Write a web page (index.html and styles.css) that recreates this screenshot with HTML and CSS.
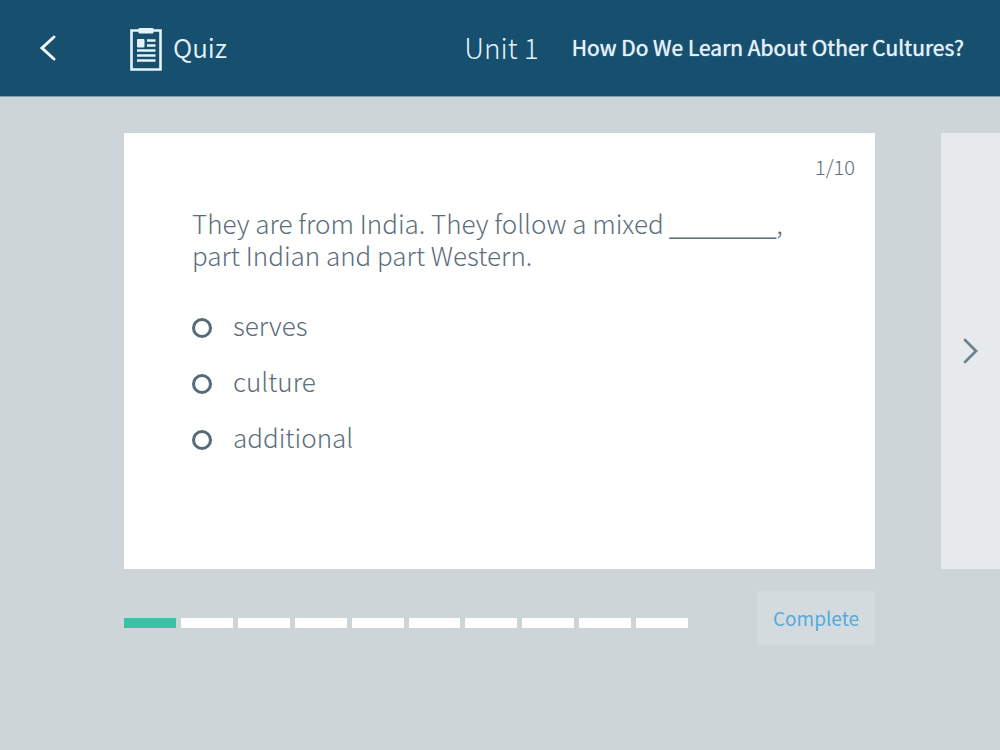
FILE: index.html
```html
<!DOCTYPE html>
<html lang="en">
<head>
  <meta charset="utf-8">
  <meta name="viewport" content="width=device-width, initial-scale=1">
  <title>Quiz - Unit 1</title>
  <link rel="stylesheet" href="styles.css">
</head>
<body>
  <header class="topbar">
    <button class="back" type="button" aria-label="Back">
      <svg width="18" height="28" viewBox="0 0 18 28" fill="none" stroke="currentColor" stroke-width="3" stroke-linecap="round"><path d="M15 3 3 14l12 11"/></svg>
    </button>
    <svg class="clipboard" width="32" height="43" viewBox="0 0 32 43" aria-hidden="true">
      <path d="M1.500 2.500h29v39h-29z" fill="none" stroke="currentColor" stroke-width="2.600"/>
      <rect x="8.500" y="0" width="15" height="5.500" rx="1" fill="currentColor"/>
      <rect x="7" y="11" width="7.500" height="8.500" rx="1" fill="currentColor"/>
      <path d="M17 12.500h8.500M17 17.500h8.500M7 22.500h18.500M7 27.500h18.500M7 32.500h18.500" stroke="currentColor" stroke-width="2.400"/>
    </svg>
    <h1 class="section">Quiz</h1>
    <span class="unit">Unit 1</span>
    <span class="topic">How Do We Learn About Other Cultures?</span>
  </header>
  <main class="stage">
    <section class="card">
      <p class="count">1/10</p>
      <fieldset class="quiz">
        <legend class="question">They are from India. They follow a mixed <span class="blank">________</span>,<br>part Indian and part Western.</legend>
        <label class="option"><input class="radio" type="radio" name="answer" value="serves">serves</label>
        <label class="option"><input class="radio" type="radio" name="answer" value="culture">culture</label>
        <label class="option"><input class="radio" type="radio" name="answer" value="additional">additional</label>
      </fieldset>
    </section>
    <button class="next" type="button" aria-label="Next question">
      <svg width="16" height="26" viewBox="0 0 16 26" fill="none" stroke="currentColor" stroke-width="2.800" stroke-linecap="round"><path d="m3 2 11 11L3 24"/></svg>
    </button>
    <div class="footer">
      <div class="progress" role="progressbar" aria-label="Progress" aria-valuemin="0" aria-valuemax="10" aria-valuenow="1">
        <span class="step current"></span><span class="step"></span><span class="step"></span><span class="step"></span><span class="step"></span><span class="step"></span><span class="step"></span><span class="step"></span><span class="step"></span><span class="step"></span>
      </div>
      <button class="complete" type="button">Complete</button>
    </div>
  </main>
</body>
</html>
```
FILE: styles.css
```css
* { box-sizing: border-box; }
body {
  margin: 0;
  min-height: 100vh;
  background: #ced5d9;
  color: #5c6e7b;
  font-family: "Noto Sans CJK SC", "Noto Sans", sans-serif;
  font-weight: 300;
}
button {
  padding: 0;
  border: 0;
  background: none;
  font: inherit;
  color: inherit;
  cursor: pointer;
}
svg { display: block; }
.topbar {
  display: flex;
  align-items: center;
  height: 97px;
  padding: 0 36px 0 39px;
  border-bottom: 1px solid #7f9fb3;
  background: #17506f;
  color: #e4f2fa;
  white-space: nowrap;
}
.back { margin-right: 73px; color: #f2f9fd; }
.clipboard { margin: 3px 11px 0 0; }
.section, .unit, .topic { padding-bottom: 2px; }
.section {
  margin: 0 auto 0 0;
  font-size: 26px;
  line-height: 36px;
  font-weight: 350;
}
.unit { margin-right: 33px; font-size: 28px; line-height: 36px; }
.topic {
  font-size: 21px;
  line-height: 36px;
  font-weight: 400;
  text-shadow: 0 0 1px currentColor;
}
.stage {
  display: grid;
  grid-template-columns: 1fr 59px;
  column-gap: 66px;
  row-gap: 22px;
  padding: 36px 0 0 124px;
}
.card { min-height: 436px; padding: 20px 20px 40px 68px; background: #fff; }
.count { margin: 0; text-align: right; font-size: 20px; line-height: 28px; }
.quiz { margin: 0; padding: 0; border: 0; min-width: 0; }
.question {
  padding: 26px 0 28px;
  font-size: 26px;
  line-height: 32px;
}
.blank {
  font-family: "Liberation Sans", Arial, sans-serif;
  font-size: 24px;
  line-height: 20px;
}
.option {
  display: flex;
  align-items: center;
  gap: 21px;
  height: 56px;
  padding-bottom: 5px;
  font-size: 26px;
}
.radio {
  appearance: none;
  width: 20px;
  height: 20px;
  margin: 6px 0 0;
  border: 3px solid #566b77;
  border-radius: 50%;
}
.radio:checked { background: #35c4a4; }
.next {
  display: flex;
  align-items: center;
  padding-left: 21px;
  background: #e6eaed;
  color: #6d808d;
}
.footer { display: flex; align-items: center; gap: 69px; }
.progress { display: flex; flex: 1; gap: 5px; margin-top: 10px; }
.step { flex: 1; height: 10px; background: #fff; }
.current { background: #35c4a4; }
.complete {
  width: 118px;
  height: 54px;
  padding-bottom: 2px;
  background: #d4dbdf;
  color: #55aadb;
  font-size: 19px;
  font-weight: 400;
}
```
